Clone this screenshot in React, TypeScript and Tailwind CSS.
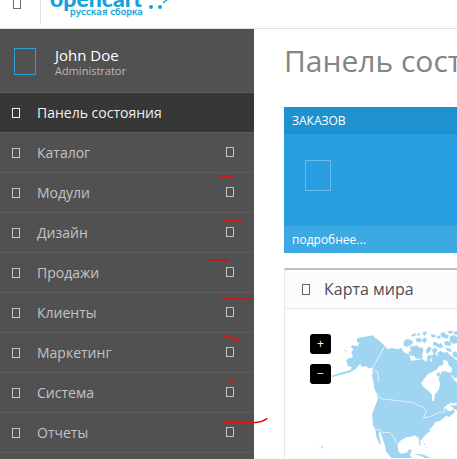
import React from 'react';
import { clsx } from 'clsx';

const menu = [
  { label: 'Панель состояния', active: true },
  { label: 'Каталог' },
  { label: 'Модули' },
  { label: 'Дизайн' },
  { label: 'Продажи' },
  { label: 'Клиенты' },
  { label: 'Маркетинг' },
  { label: 'Система' },
  { label: 'Отчеты' },
];

// Empty glyph box
const Box = ({ className }: { className?: string }) => (
  <span aria-hidden="true" className={clsx('block shrink-0 border', className)} />
);

const Header = () => (
  <header className="flex h-[29px] items-start overflow-hidden border-b border-[#e1e1e1] bg-white">
    <button aria-label="Меню" className="flex h-6 w-[41px] shrink-0 border-r border-[#e1e1e1] pl-[13px]">
      <Box className="h-[9px] w-2 border-t-0 border-[#6d6d6d]" />
    </button>
    <a href="#" aria-label="opencart русская сборка" className="ml-2 block">
      <svg width="130" height="20" viewBox="0 0 130 20" fill="#10a3db">
        <text x="1" y="7" className="font-['Lato'] text-[23px] font-black">opencart</text>
        <text x="21" y="15" stroke="#10a3db" strokeWidth="0.3" className="font-['DejaVu_Sans',sans-serif] text-[9px]">
          русская сборка
        </text>
        <circle cx="102" cy="7" r="2" />
        <circle cx="111" cy="7" r="2" />
        <path d="M114 3l4-3" stroke="#10a3db" strokeWidth="1.5" />
      </svg>
    </a>
  </header>
);

const Sidebar = () => (
  <aside className="w-[254px] shrink-0 bg-[#515151]">
    <div className="flex h-16 items-start border-b border-[#5c5c5c] pt-4 pl-[14px]">
      <Box className="mt-[3px] h-[27px] w-[22px] border-[#2aa0d8]" />
      <div className="ml-[19px]">
        <h4 className="text-[15px] leading-5 text-white">John Doe</h4>
        <small className="block text-[11px] leading-3 text-[#bababa]">Administrator</small>
      </div>
    </div>
    <nav>
      <ul>
        {menu.map(item => (
          <li key={item.label} className="border-b border-[#5c5c5c]">
            <a
              href="#"
              className={clsx(
                'flex h-[39px] items-center pr-5 pl-3 text-[14px]',
                item.active ? 'bg-[#373737] text-[#f0f0f0]' : 'text-[#c4c4c4]'
              )}
            >
              <Box className="h-[10px] w-2 border-current" />
              <span className="ml-[17px] flex-1">{item.label}</span>
              {!item.active && <Box className="mb-0.5 h-[10px] w-2 border-current" />}
            </a>
          </li>
        ))}
      </ul>
    </nav>
  </aside>
);

const OrdersTile = () => (
  <section className="bg-[#279fe0] text-white">
    <h2 className="h-[27px] bg-[#1e91cf] px-2 text-[12px] leading-[27px]">ЗАКАЗОВ</h2>
    <div className="h-[92px] pt-[26px] pl-[21px]">
      <Box className="h-[31px] w-[26px] border-[#69bcea]" />
    </div>
    <a href="#" className="block h-[27px] bg-[#3da9e3] px-2 text-[12px] leading-[27px]">подробнее...</a>
  </section>
);

const WorldMap = () => (
  <svg role="img" aria-label="Карта мира" width="167" height="149" viewBox="0 0 501 447" className="block">
    <g fill="#a0d5f1">
      {/* Alaska */}
      <path d="M202 88L247 79L285 110L247 178L234 177L229 171L216 174L210 165L197 180L181 190L150 198L126 204L124 201L150 192L182 182L186 175L173 170L168 154L174 149L190 144L184 132L190 120L182 115L186 109L202 112L208 104L200 97Z" />
      <path d="M162 120l7 5-3 3zM137 199l-10 5v-4z" />
      {/* Mainland */}
      <path d="M285 110L292 120L306 117L325 121L333 116L342 130L358 137L362 155L384 153L397 150L408 158L417 151L426 160L430 151L424 140L434 132L444 145L452 139L460 155L459 168L447 172L440 182L414 195L393 222L401 235L419 249L426 258L426 275L432 276L434 258L446 242L451 224L446 211L454 188L466 186L483 199L490 211L501 221V281L481 283L467 291L458 299L468 298L474 306L483 306L490 300L495 309L484 319L476 325L470 320L463 325L450 336L437 338L429 350L420 360L419 368L406 378L394 392L390 396L392 410L388 409L386 386L373 379L361 384L350 384L331 395L323 406L324 424L331 434L350 431L358 421L366 423L359 439L367 447H305L289 429L286 413L272 371L266 369L272 405L268 405L259 383L256 361L249 347L246 315L264 269L258 250L253 238L247 178Z" />
      {/* Arctic islands */}
      <g transform="translate(321 45)">
        <path d="M21 51l8-6 12 2 8 8-8 9-14 5-8-7zM38 67l14 0 7-4 8 8 10-1 2 12-4 10 3 8-8 6-14-3-4-6-14-3-4-9 8-5zM42 33l14-6 1 6-10 6zM59 31l9-4 2 6-8 2zM55 44l13-3 8 7-8 8-10-4zM77 44l9-4 4 8-7 9-7-5zM78 25l9-3 3 5-8 9-5-6zM101 31l14 1 2 6-12 3z" />
        <path d="M87 76l10-9 7 6-6 11-9 7zM91 97l7-6 6 9-8 14-6-4zM106 75l9-4 7 7-7 12-9-5zM102 94l8-2-2 13 8 10-10 2zM107 55l10-2 8 7 8-2 7 10-11 5-11-6-9-3zM118 39l9-5 5 7-8 4z" />
        <path d="M131 28l10-4 6 7 9 3-4 10-13-3-8-5zM151 22l15-2 4 6-12 4zM158 38l11-5 11 6v17l-10 4-12-8zM172 23l8-2v12l-9-2zM141 55l10-5 12 7-4 9-14-2zM145 70l16 4 3 10-13-3z" />
        <path d="M121 86l11-6 9 7 8-4 9 9 12 9 10 10v48l-8 5-6-10-10 4-12-9 8-5 11 2 2-14-10-8-4-13-11-4-7 4-11-9zM118 151l8-7 5 9-9 6zM165 87l9-5 6 4v16l-10-4z" />
      </g>
      <path d="M480 288l12 2 9-4v18l-9-4zM369 438l17-4 18 5 18 8h-17l-13-7-10-2zM402 402l4 2-3 5zM407 412l4 3-3 2zM244 193l6 5 4 22-5-5zM250 215l7 9 3 20-7-8z" />
      {/* Hawaii */}
      <path d="M75 397l4 2-2 2zM84 404l3 2-3 1zM92 410l7 5-4 5z" />
    </g>
    {/* Borders */}
    <path
      d="M285 110L247 178L257 187L263 188L266 219M258 250L273 269L371 281L390 292L397 292L410 304L401 326L419 324L447 310L461 310L468 294M256 361L272 363L276 371L300 370L313 387L319 401L323 405"
      fill="none"
      stroke="#fff"
      strokeWidth="2"
    />
  </svg>
);

const MapPanel = () => (
  <section className="mt-[15px] border-t-2 border-l border-[#e8e8e8] border-t-[#bfbfbf] bg-white">
    <div className="flex h-[39px] items-center border-b border-[#e8e8e8] bg-[#fcfcfc] pl-[17px]">
      <Box className="h-[11px] w-2 border-[#666666]" />
      <h3 className="ml-[14px] text-[16px] whitespace-nowrap text-[#4c4d5a]">Карта мира</h3>
    </div>
    <div className="relative pl-[5px]">
      <WorldMap />
      <div className="absolute top-[25px] left-[25px] flex flex-col gap-[10px]">
        {['+', '−'].map(sign => (
          <button key={sign} className="h-5 w-[21px] rounded-[3px] bg-black text-center text-[12px] leading-5 text-white">
            {sign}
          </button>
        ))}
      </div>
    </div>
  </section>
);

// Hand-drawn pen strokes over the menu
const Marks = () => (
  <svg
    aria-hidden="true"
    width="80"
    height="270"
    viewBox="200 160 80 270"
    fill="none"
    stroke="#ed1010"
    strokeWidth="1"
    className="pointer-events-none absolute top-[160px] left-[200px]"
  >
    <path d="M219 176h14" stroke="#d31515" strokeWidth="2" />
    <path d="M223.5 218v3M223 220.5h20" stroke="#d31515" />
    <path d="M209 259.5h20M209 260.5h20M225 261.5h4M221 298.5h31" stroke="#b91c1c" />
    <path d="M223.5 334l1 2 4 1 3 1h5v5M228 379.5l2 1h4" strokeWidth="1.5" />
    <path d="M223.5 420l1 2.5h31l6-1 6-3" strokeWidth="1.5" />
  </svg>
);

export default function App() {
  return (
    <div className="relative flex min-h-screen flex-col overflow-hidden bg-white font-['Open_Sans','Noto_Sans',sans-serif]">
      <Header />
      <div className="flex flex-1">
        <Sidebar />
        <main className="min-w-0 flex-1 overflow-hidden pl-[30px]">
          <h1 className="mb-4 pt-1.5 pb-[5px] text-[30px] leading-[51px] whitespace-nowrap text-[#848484]">Панель состояния</h1>
          <OrdersTile />
          <MapPanel />
        </main>
      </div>
      <Marks />
    </div>
  );
}
